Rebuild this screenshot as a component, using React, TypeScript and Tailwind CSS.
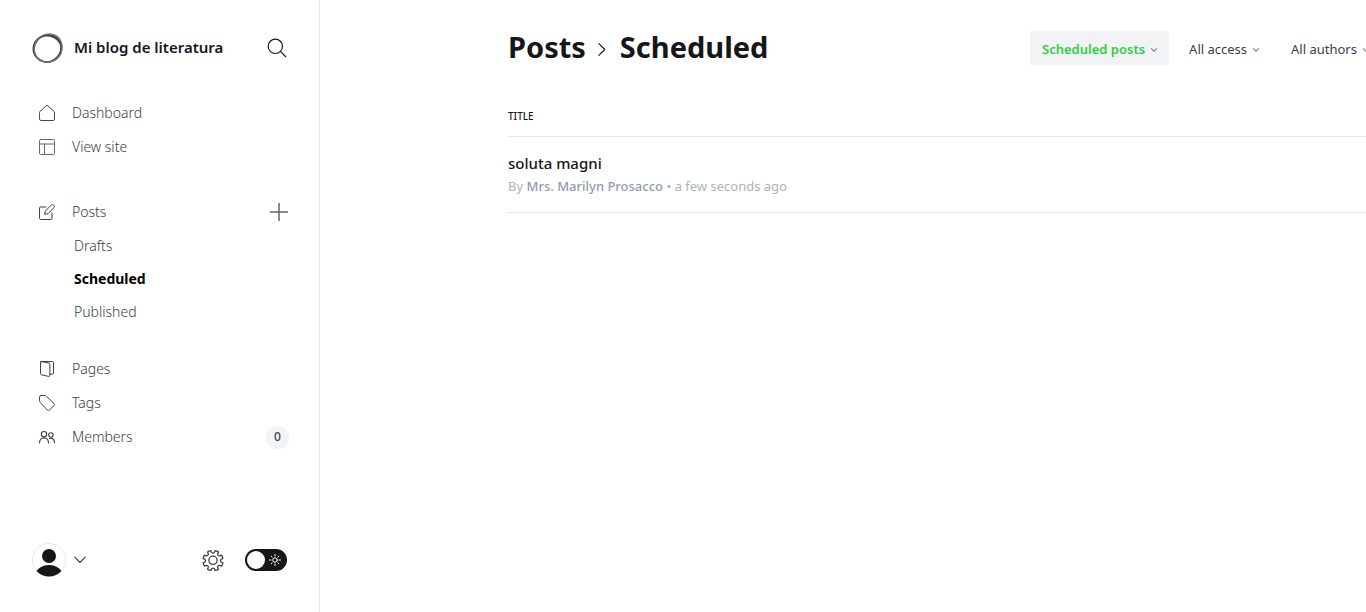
import type { ReactNode } from 'react';

const stroke = {
  fill: 'none',
  stroke: 'currentColor',
  strokeWidth: 1.5,
  strokeLinecap: 'round' as const,
  strokeLinejoin: 'round' as const,
  viewBox: '0 0 24 24',
  'aria-hidden': true,
};

const HomeIcon = () => (
  <svg {...stroke} className="size-4">
    <path d="M.8 10.3 10.7 1.2a2 2 0 0 1 2.6 0l9.9 9.1v11a1.9 1.9 0 0 1-1.9 1.9H2.7a1.9 1.9 0 0 1-1.9-1.9z" />
  </svg>
);

const LayoutIcon = () => (
  <svg {...stroke} className="size-4 text-[#5d666f]">
    <rect x=".8" y=".8" width="22.4" height="22.4" rx="1.5" />
    <path d="M.8 7.5h22.4M8.2 7.5v15.7" />
  </svg>
);

const EditIcon = () => (
  <svg {...stroke} className="size-4">
    <path d="m13.3 14.5-4.8.9.9-4.8L18.6 1.5a2.3 2.3 0 0 1 3.3 0l.5.5a2.3 2.3 0 0 1 0 3.3z" />
    <path d="M19.5 13.5v8.2a1.5 1.5 0 0 1-1.5 1.5H2.3a1.5 1.5 0 0 1-1.500-1.500V6a1.500 1.500 0 0 1 1.500-1.500h8.200" />
  </svg>
);

const PagesIcon = () => (
  <svg {...stroke} className="size-4">
    <path d="M3.200.8 14.600 2.900a2 2 0 0 1 1.700 2v16.800a1.500 1.500 0 0 1-1.900 1.400L3.500 20.600a1.600 1.600 0 0 1-1.200-1.500V1.600a.8.8 0 0 1 .9-.8z" />
    <path d="M3.200.8h17.100a1.500 1.500 0 0 1 1.500 1.500v15.800a1.500 1.500 0 0 1-1.500 1.500h-4" />
  </svg>
);

const TagIcon = () => (
  <svg {...stroke} className="size-4">
    <path d="M.8 2.900A2.100 2.100 0 0 1 2.900.8h5.500a4 4 0 0 1 2.800 1.200l11.300 10.700a2.200 2.200 0 0 1 0 3.100l-6.800 6.800a2.200 2.200 0 0 1-3.100 0L2 11.300a4 4 0 0 1-1.200-2.800z" />
  </svg>
);

const MembersIcon = () => (
  <svg {...stroke} strokeWidth={1.7} className="size-4">
    <circle cx="7.500" cy="7.800" r="4" />
    <path d="M.8 20.500c0-4.200 2.900-7.200 6.700-7.200s6.700 3 6.700 7.200" />
    <circle cx="17.800" cy="9" r="3.300" />
    <path d="M15.800 14.200c4-1.500 7.400 1.600 7.400 6.300" />
  </svg>
);

const SearchIcon = () => (
  <svg {...stroke} strokeWidth={1.4} className="size-5">
    <circle cx="10" cy="10" r="8.600" />
    <path d="m16.300 16.300 6.200 6.200" />
  </svg>
);

const GearIcon = () => (
  <svg {...stroke} strokeWidth={1.4} className="size-[22px]">
    <path d="M10.100 3.100a2 2 0 0 0 3.800 0l.4-1.200a10.500 10.500 0 0 1 3.700 1.500l-.6 1.200a2 2 0 0 0 2.700 2.700l1.200-.6a10.500 10.500 0 0 1 1.500 3.700l-1.200.4a2 2 0 0 0 0 3.800l1.200.4a10.500 10.500 0 0 1-1.500 3.700l-1.200-.6a2 2 0 0 0-2.700 2.700l.6 1.200a10.500 10.500 0 0 1-3.700 1.500l-.4-1.200a2 2 0 0 0-3.800 0l-.4 1.200A10.500 10.500 0 0 1 6 22l.6-1.200a2 2 0 0 0-2.700-2.700l-1.200.6A10.500 10.500 0 0 1 1.200 15l1.200-.4a2 2 0 0 0 0-3.800l-1.200-.4a10.500 10.500 0 0 1 1.500-3.700l1.200.6a2 2 0 0 0 2.700-2.700L6 3.400a10.500 10.500 0 0 1 3.700-1.500z" />
    <circle cx="12" cy="12.300" r="4.500" />
  </svg>
);

const SunIcon = () => (
  <svg {...stroke} strokeWidth={2} className="pointer-events-none absolute right-[6px] size-3 text-white">
    <circle cx="12" cy="12" r="4.500" />
    <path d="M12 1v3M12 20v3M1 12h3M20 12h3M4.200 4.200l2.100 2.100M17.700 17.700l2.100 2.100M4.200 19.800l2.100-2.100M17.700 6.300l2.100-2.100" />
  </svg>
);

const Logo = () => (
  <svg viewBox="0 0 32 32" fill="none" className="size-8" aria-hidden="true">
    <path
      d="M10 4.500C14 1.500 20 .8 24 2.800c4 2 6 5.700 6.500 10 .5 4.500-.2 8.500-2.500 12 1.300-4.300 1.500-8.800-.5-12.500C24.500 6.500 17 3.500 10 4.500z"
      fill="#a8a8a8"
    />
    <ellipse cx="15.300" cy="16.700" rx="14" ry="13.300" stroke="#333" strokeWidth="1.500" />
    <ellipse cx="15.600" cy="16.400" rx="14.100" ry="12.800" stroke="#444" strokeWidth="1.300" transform="rotate(-48 15.600 16.400)" />
    <ellipse cx="16.200" cy="16" rx="14.400" ry="13.600" stroke="#777" strokeWidth="1.200" transform="rotate(-50 16.200 16)" />
  </svg>
);

const Chevron = ({ className }: { className: string }) => (
  <svg {...stroke} strokeWidth={1.1} viewBox="0 0 12 8" className={className}>
    <path d="m.8 1.200 5.200 5.300 5.200-5.300" vectorEffect="non-scaling-stroke" />
  </svg>
);

function NavLink({ icon, children }: { icon: ReactNode; children: ReactNode }) {
  return (
    <a href="#" className="flex h-[34px] flex-1 items-center gap-[17px] pl-[39px]">
      {icon}
      {children}
    </a>
  );
}

function SubLink({ active, children }: { active?: boolean; children: string }) {
  return (
    <a
      href="#"
      aria-current={active ? 'page' : undefined}
      className={
        active
          ? 'flex h-[33px] items-center pl-[74px] font-bold text-black'
          : 'flex h-[33px] items-center pl-[74px]'
      }
    >
      {children}
    </a>
  );
}

function Filter({ active, children }: { active?: boolean; children: string }) {
  return (
    <button
      type="button"
      className={
        active
          ? 'flex h-[34px] items-center gap-[6px] rounded-[3px] bg-[#f1f3f4] px-3 pt-[3px] font-semibold text-[#30cf43]'
          : 'flex h-[34px] items-center gap-[6px] px-3 pt-[3px]'
      }
    >
      {children}
      <Chevron className="h-1 w-[6px] text-[#7c8b9a]" />
    </button>
  );
}

export default function App() {
  return (
    <div className="flex h-screen bg-white font-['Noto_Sans','Open_Sans',sans-serif] text-[#394047]">
      <aside className="flex w-80 shrink-0 flex-col border-r border-[#e5e9ed] text-sm">
        <header className="flex h-24 items-center pr-8 pl-8">
          <Logo />
          <span className="ml-[10px] flex-1 text-[15px] font-semibold text-[#15171a]">Mi blog de literatura</span>
          <button type="button" aria-label="Search" className="text-[#15171a]">
            <SearchIcon />
          </button>
        </header>

        <nav className="flex-1 font-light">
          <div className="mb-[31px]">
            <NavLink icon={<HomeIcon />}>Dashboard</NavLink>
            <NavLink icon={<LayoutIcon />}>View site</NavLink>
          </div>
          <div className="mb-6">
            <div className="flex items-center pr-[31px]">
              <NavLink icon={<EditIcon />}>Posts</NavLink>
              <button type="button" aria-label="New post" className="text-[#5d666f]">
                <svg {...stroke} viewBox="0 0 18 18" className="size-[18px]">
                  <path d="M9 0v18M0 9h18" />
                </svg>
              </button>
            </div>
            <SubLink>Drafts</SubLink>
            <SubLink active>Scheduled</SubLink>
            <SubLink>Published</SubLink>
          </div>
          <NavLink icon={<PagesIcon />}>Pages</NavLink>
          <NavLink icon={<TagIcon />}>Tags</NavLink>
          <div className="flex items-center pr-[30px]">
            <NavLink icon={<MembersIcon />}>Members</NavLink>
            <span className="flex size-[23px] items-center justify-center rounded-full bg-[#f1f3f4] text-xs font-medium">
              0
            </span>
          </div>
        </nav>

        <footer className="flex h-[104px] items-center pr-8 pl-8">
          <button type="button" aria-label="Account" className="flex items-center gap-2">
            <svg viewBox="0 0 34 34" className="size-[34px]" aria-hidden="true">
              <clipPath id="avatar">
                <circle cx="17" cy="17" r="16.500" />
              </clipPath>
              <circle cx="17" cy="17" r="16.500" fill="#fff" stroke="#e5e9ed" />
              <g clipPath="url(#avatar)" fill="#15171a">
                <circle cx="17" cy="13" r="7" />
                <ellipse cx="17" cy="32" rx="13.500" ry="10" />
              </g>
            </svg>
            <Chevron className="h-2 w-3" />
          </button>
          <button type="button" aria-label="Settings" className="ml-auto">
            <GearIcon />
          </button>
          <label className="relative ml-[21px] flex items-center">
            <input
              type="checkbox"
              role="switch"
              aria-label="Night shift"
              className="h-[22px] w-[42px] appearance-none rounded-full bg-[#15171a] before:m-[2px] before:block before:size-[18px] before:rounded-full before:bg-white"
            />
            <SunIcon />
          </label>
        </footer>
      </aside>

      <main className="min-w-0 flex-1 overflow-hidden pl-[188px]">
        <header className="grid h-24 grid-cols-[522px_max-content] items-center">
          <h1 className="flex items-center pb-[2px] text-[29px] font-bold text-[#15171a]">
            <a href="#">Posts</a>
            <Chevron className="mt-1 mr-[10px] ml-2 h-[9px] w-4 -rotate-90" />
            <span>Scheduled</span>
          </h1>
          <div className="flex gap-2 text-[13px] whitespace-nowrap">
            <Filter active>Scheduled posts</Filter>
            <Filter>All access</Filter>
            <Filter>All authors</Filter>
          </div>
        </header>
        <table className="w-full text-left">
          <thead>
            <tr className="h-10 border-b border-[#e5e9ed]">
              <th className="pt-[2px] text-[10px] font-medium text-[#15171a]">TITLE</th>
            </tr>
          </thead>
          <tbody>
            <tr className="h-[76px] border-b border-[#e5e9ed]">
              <td>
                <h3 className="text-[15px] leading-6 font-medium text-[#15171a]">soluta magni</h3>
                <p className="text-[13px] leading-[22px] text-[#abb4be]">
                  By <span className="font-medium text-[#8e9cac]">Mrs. Marilyn Prosacco</span> • a few seconds ago
                </p>
              </td>
            </tr>
          </tbody>
        </table>
      </main>
    </div>
  );
}
